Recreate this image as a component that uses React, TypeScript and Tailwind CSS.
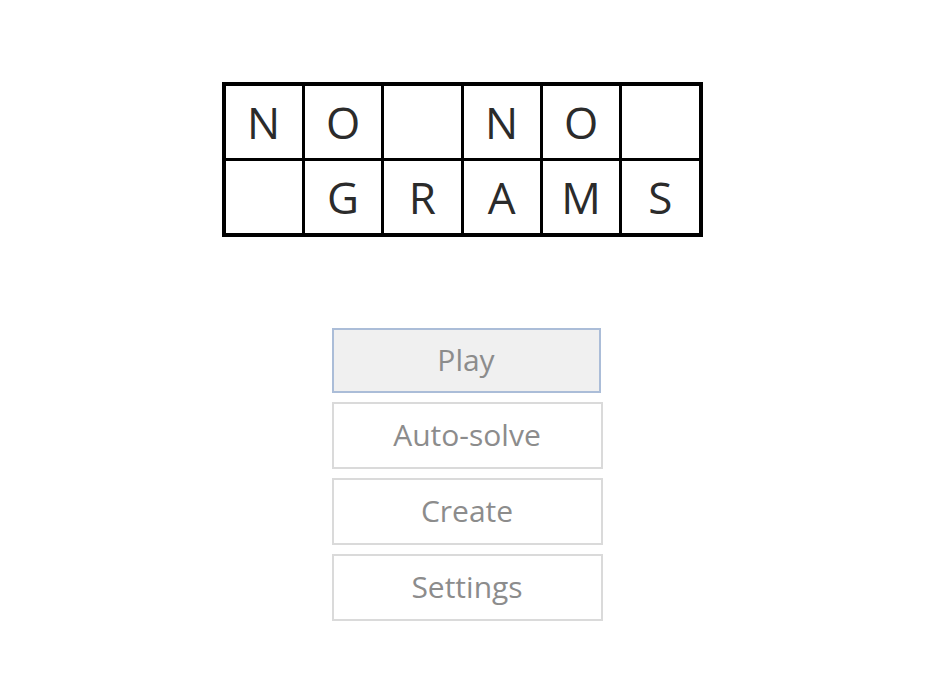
import React from "react";

const rows = [
  ["N", "O", "", "N", "O", ""],
  ["", "G", "R", "A", "M", "S"],
];

const menu = ["Play", "Auto-solve", "Create", "Settings"];

export default function App() {
  return (
    <div
      className="w-[948px] h-[678px] bg-white flex flex-col items-center"
      style={{ fontFamily: '"Open Sans", "Noto Sans", sans-serif' }}
    >
      <div className="mt-[82px] mr-[24px] border-[4px] border-black bg-black grid grid-cols-6 gap-[3px] w-[481px]">
        {rows.flat().map((ch, i) => (
          <div
            key={i}
            className="bg-white h-[72px] flex items-center justify-center text-[44px] text-[#2b2b2b] leading-none"
          >
            {ch}
          </div>
        ))}
      </div>

      <div className="mt-[91px] mr-[14px] flex flex-col gap-[9px]">
        {menu.map((label, i) => (
          <button
            key={label}
            className={
              i === 0
                ? "w-[269px] h-[65px] border-2 border-[#abbdd8] bg-[#f0f0f0] text-[#8c8c8c] text-[30px] pb-[2px]"
                : "w-[271px] h-[67px] border-2 border-[#dadada] bg-white text-[#8c8c8c] text-[30px] pb-[2px]"
            }
          >
            {label}
          </button>
        ))}
      </div>
    </div>
  );
}
